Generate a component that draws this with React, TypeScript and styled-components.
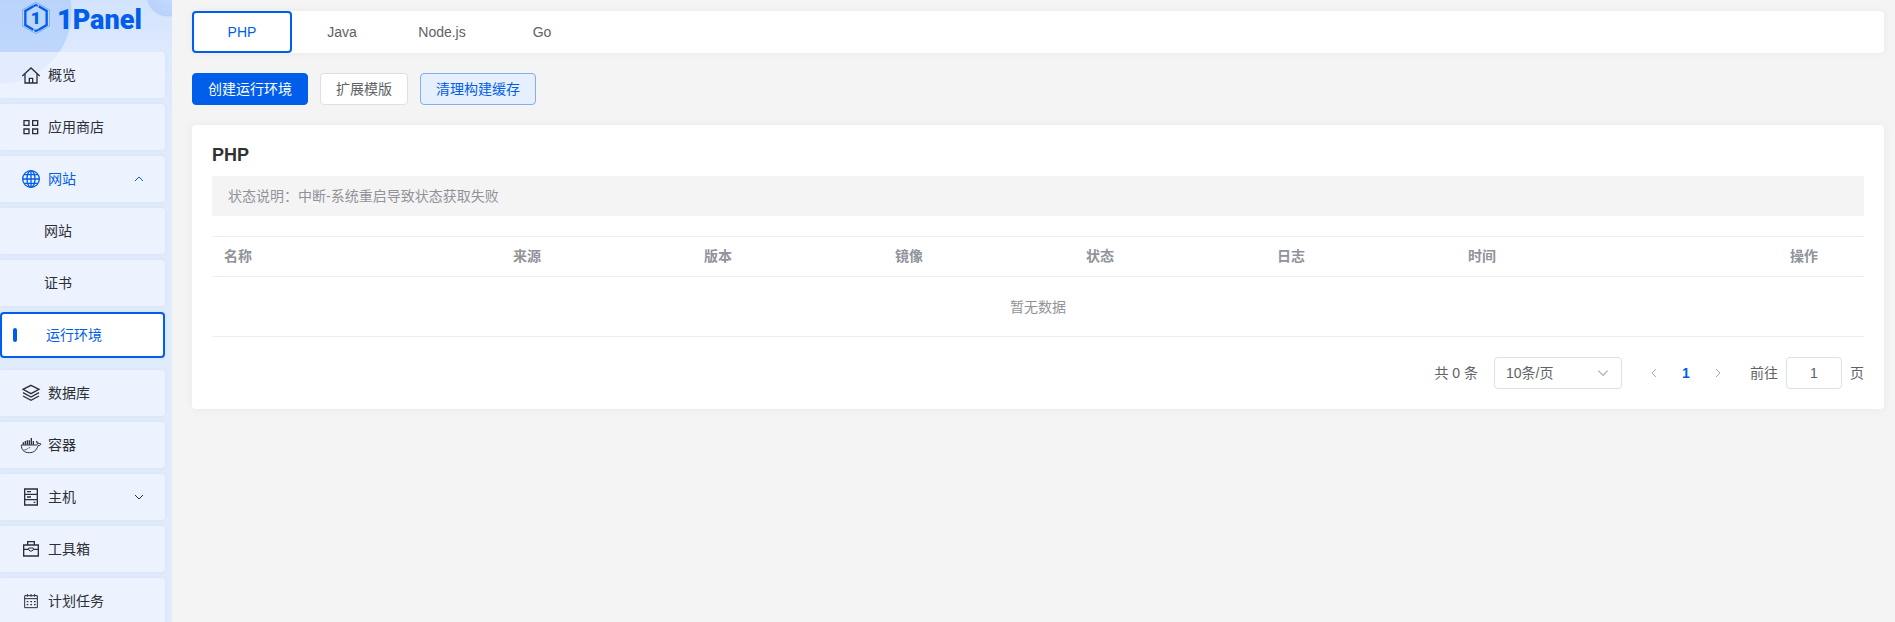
import React, { useState } from 'react';
import styled, { createGlobalStyle, css } from 'styled-components';

const blue = '#005eeb';
const borderGrey = '#dcdfe6';
const lineGrey = '#ebeef5';

const GlobalStyle = createGlobalStyle`
  *, *::before, *::after { box-sizing: border-box; }
  body {
    margin: 0;
    background: #f4f4f4;
    color: #606266;
    font-family: "Liberation Sans", "Noto Sans CJK SC", sans-serif;
    font-size: 14px;
    line-height: 20px;
  }
  button, input, select { font: inherit; color: inherit; margin: 0; }
`;

const Shell = styled.div`
  display: flex;
  height: 100vh;
`;

const Sidebar = styled.aside`
  display: flex;
  flex-direction: column;
  flex: none;
  width: 172px;
  overflow: hidden;
  background:
    radial-gradient(circle at 168px -5px, #c6dbfc 0, #b9d2fb 21px, transparent 22px),
    radial-gradient(circle at 0 12px, rgba(160, 196, 250, 0.5) 0, rgba(160, 196, 250, 0.5) 71px, transparent 72px),
    linear-gradient(180deg, #d3e3fd 0, #dde9fd 52px, #e0ebfb 120px, #e0ebfb 100%);
`;

const Logo = styled.a`
  display: flex;
  align-items: center;
  gap: 7px;
  flex: none;
  height: 52px;
  padding: 0 0 16px 22px;
  color: ${blue};
  text-decoration: none;
`;

const LogoName = styled.span`
  padding-top: 4px;
  font-family: Roboto, sans-serif;
  font-size: 27px;
  font-weight: 900;
  line-height: 32px;
`;

const Menu = styled.nav`
  flex: 1;
  min-height: 0;
  overflow-y: auto;
  scrollbar-width: none;
`;

const MenuList = styled.ul`
  display: flex;
  flex-direction: column;
  gap: 6px;
  margin: 0;
  padding: 0 7px 6px 0;
  list-style: none;
`;

const SubList = styled(MenuList)`
  padding: 6px 0;
`;

const MenuLink = styled.a<{ $sub?: boolean; $open?: boolean; $active?: boolean }>`
  display: flex;
  align-items: center;
  gap: 8px;
  height: 46px;
  padding: 0 20px 0 ${(p) => (p.$sub ? '44px' : '22px')};
  border-radius: 0 4px 4px 0;
  background: rgba(244, 248, 255, 0.65);
  box-shadow: 0 0 4px rgba(0, 94, 235, 0.05);
  color: ${(p) => (p.$open ? blue : '#2b2f36')};
  text-decoration: none;

  ${(p) =>
    p.$active &&
    css`
      gap: 29px;
      padding-left: 11px;
      border: 2px solid ${blue};
      border-radius: 4px;
      background: #fff;
      color: ${blue};

      &::before {
        content: '';
        width: 4px;
        height: 14px;
        border-radius: 2px;
        background: ${blue};
      }
    `}
`;

const MenuLabel = styled.span`
  flex: 1;
`;

const Main = styled.main`
  flex: 1;
  display: flex;
  flex-direction: column;
  gap: 20px;
  min-width: 0;
  padding: 11px 11px 20px 20px;
  overflow-y: auto;
`;

const Tabs = styled.div`
  display: flex;
  border-radius: 4px;
  background: #fff;
  box-shadow: 0 0 8px rgba(0, 0, 0, 0.05);
`;

const Tab = styled.button<{ $active: boolean }>`
  width: 100px;
  height: 42px;
  padding: 0;
  border: 2px solid ${(p) => (p.$active ? blue : 'transparent')};
  border-radius: 4px;
  background: transparent;
  color: ${(p) => (p.$active ? blue : '#606266')};
  cursor: pointer;
`;

const Actions = styled.div`
  display: flex;
  gap: 12px;
`;

const variants = {
  primary: css`
    border-color: ${blue};
    background: ${blue};
    color: #fff;
  `,
  plain: css`
    border-color: ${borderGrey};
    background: #fff;
    color: #606266;
  `,
  tinted: css`
    border-color: #80aff5;
    background: #e5effd;
    color: ${blue};
  `,
};

const ActionButton = styled.button<{ $variant: keyof typeof variants }>`
  height: 32px;
  padding: 0 15px;
  border: 1px solid;
  border-radius: 4px;
  cursor: pointer;
  ${(p) => variants[p.$variant]}
`;

const Card = styled.section`
  padding: 20px;
  border-radius: 4px;
  background: #fff;
  box-shadow: 0 0 10px rgba(0, 0, 0, 0.05);
`;

const Title = styled.h1`
  margin: 0 0 11px;
  color: #303133;
  font-size: 18px;
  line-height: 20px;
`;

const Notice = styled.p`
  margin: 0 0 20px;
  padding: 10px 16px;
  background: #f4f4f5;
  color: #909399;
`;

const Table = styled.table`
  width: 100%;
  border-collapse: collapse;
  table-layout: fixed;
  color: #909399;
`;

const HeadCell = styled.th<{ $width?: string; $center?: boolean }>`
  width: ${(p) => p.$width ?? 'auto'};
  height: 40px;
  padding: 0 12px 2px;
  border: solid ${lineGrey};
  border-width: 1px 0;
  text-align: ${(p) => (p.$center ? 'center' : 'left')};
`;

const EmptyCell = styled.td`
  height: 60px;
  padding: 0;
  border-bottom: 1px solid ${lineGrey};
  text-align: center;
`;

const Pagination = styled.div`
  display: flex;
  align-items: center;
  justify-content: flex-end;
  gap: 16px;
  margin-top: 20px;
`;

const SelectBox = styled.div`
  display: grid;
  align-items: center;
  width: 128px;

  & > * { grid-area: 1 / 1; }
  & > svg {
    z-index: 1;
    justify-self: end;
    margin-right: 12px;
    color: #a8abb2;
    pointer-events: none;
  }
`;

const Select = styled.select`
  width: 100%;
  height: 32px;
  padding: 0 11px;
  border: 1px solid ${borderGrey};
  border-radius: 4px;
  background: #fff;
  appearance: none;
`;

const Pager = styled.div`
  display: flex;
`;

const PageButton = styled.button<{ $current?: boolean }>`
  display: flex;
  align-items: center;
  justify-content: center;
  width: 32px;
  height: 32px;
  padding: 0;
  border: 0;
  background: transparent;
  color: ${(p) => (p.$current ? blue : '#a8abb2')};
  font-weight: ${(p) => (p.$current ? 700 : 400)};
`;

const JumpLabel = styled.label`
  display: flex;
  align-items: center;
  gap: 8px;
`;

const JumpInput = styled.input`
  width: 56px;
  height: 32px;
  padding: 0 11px;
  border: 1px solid ${borderGrey};
  border-radius: 4px;
  background: #fff;
  text-align: center;
`;

const icons = {
  home: (
    <>
      <path d="M1 30 27 6l26 24" />
      <path d="M9 24v27h36V24M22 51V37h10v14" />
    </>
  ),
  apps: <path d="M6 8h15v14H6zM32 8h15v14H32zM6 33h15v14H6zM32 33h15v14H32z" />,
  globe: (
    <>
      <circle cx="27" cy="27" r="25" />
      <ellipse cx="27" cy="27" rx="12" ry="25" />
      <path d="M2 27h50M27 2v50M6 14h42M6 40h42" />
    </>
  ),
  layers: <path d="M27 4 51 16 27 29 3 16zM3 26l24 13 24-13M3 36l24 13 24-13" />,
  docker: (
    <>
      <path d="M-2 27h44c4 0 5-2 4-5l-3-6c4 1 6 4 6 7 4-1 6 0 8 1-2 4-5 5-9 5-4 14-13 21-26 21C6 50-2 42-2 27z" strokeWidth="3" />
      <path d="M4 26v-7M10 26V15M16 26V13M22 26V13M28 26V6M34 26V15" strokeWidth="4" />
      <path d="M4 42c7 0 12-2 15-6" strokeWidth="2" />
      <circle cx="23" cy="35" r="1" strokeWidth="2" />
    </>
  ),
  server: (
    <>
      <path d="M8 3h38v48H8zM8 19h38M8 35h38" />
      <path d="M15 11h12M15 27h12M35 43h5" />
    </>
  ),
  toolbox: (
    <>
      <path d="M5 15h44v33H5zM17 15V5h20v10M5 28h13M36 28h13" />
      <path d="M20 24h14v6l-7 4-7-4z" strokeWidth="3" />
    </>
  ),
  calendar: (
    <>
      <path d="M8 11h38v36H8zM8 20h38" strokeWidth="3" />
      <path d="M16 6v8M27 6v8M38 6v8" strokeWidth="3" />
      <path d="M14 29h5M25 29h5M36 29h5M14 38h5M25 38h5M36 38h5" />
    </>
  ),
};

type IconName = keyof typeof icons;

const MenuIcon = ({ name }: { name: IconName }) => (
  <svg width="18" height="18" viewBox="0 0 54 54" fill="none" stroke="currentColor" strokeWidth="4" overflow="visible" aria-hidden="true">
    {icons[name]}
  </svg>
);

const chevrons = {
  up: 'M2 8l4-4 4 4',
  down: 'M2 4l4 4 4-4',
  left: 'M8 2L4 6l4 4',
  right: 'M4 2l4 4-4 4',
};

const Chevron = ({ to, size = 12 }: { to: keyof typeof chevrons; size?: number }) => (
  <svg width={size} height={size} viewBox="0 0 12 12" fill="none" stroke="currentColor" aria-hidden="true">
    <path d={chevrons[to]} />
  </svg>
);

const LogoMark = () => (
  <svg width="28" height="32" viewBox="0 0 84 96" fill="none" stroke="currentColor" aria-hidden="true">
    <path d="M42 1 83 24v48L42 95 1 72V24z" strokeWidth="2" opacity="0.5" />
    <path d="M50 13 74 27v42L50 83M34 13 10 27v42l24 14" strokeWidth="7" />
    <path d="M34 13l8-4 5 3M50 83l-8 4-5-3" strokeWidth="6" />
    <text x="41" y="66" textAnchor="middle" fill="currentColor" stroke="none" fontFamily="Roboto, sans-serif" fontWeight="900" fontSize="52">
      1
    </text>
  </svg>
);

type Item = { label: string; icon: IconName; arrow?: 'up' | 'down'; children?: string[] };

const menu: Item[] = [
  { label: '概览', icon: 'home' },
  { label: '应用商店', icon: 'apps' },
  { label: '网站', icon: 'globe', arrow: 'up', children: ['网站', '证书', '运行环境'] },
  { label: '数据库', icon: 'layers' },
  { label: '容器', icon: 'docker' },
  { label: '主机', icon: 'server', arrow: 'down' },
  { label: '工具箱', icon: 'toolbox' },
  { label: '计划任务', icon: 'calendar' },
];

const tabs = ['PHP', 'Java', 'Node.js', 'Go'];

const columns = [
  { label: '名称', width: '17.5%' },
  { label: '来源', width: '11.56%' },
  { label: '版本', width: '11.56%' },
  { label: '镜像', width: '11.56%' },
  { label: '状态', width: '11.56%' },
  { label: '日志', width: '11.56%' },
  { label: '时间' },
  { label: '操作', width: '120px', center: true },
];

export default function App() {
  const [tab, setTab] = useState('PHP');
  const [page, setPage] = useState('1');

  return (
    <>
      <GlobalStyle />
      <Shell>
        <Sidebar>
          <Logo href="#">
            <LogoMark />
            <LogoName>1Panel</LogoName>
          </Logo>
          <Menu>
            <MenuList>
              {menu.map((item) => (
                <li key={item.label}>
                  <MenuLink href="#" $open={item.arrow === 'up'}>
                    <MenuIcon name={item.icon} />
                    <MenuLabel>{item.label}</MenuLabel>
                    {item.arrow && <Chevron to={item.arrow} />}
                  </MenuLink>
                  {item.children && (
                    <SubList>
                      {item.children.map((label) => (
                        <li key={label}>
                          <MenuLink href="#" $sub $active={label === '运行环境'}>
                            <MenuLabel>{label}</MenuLabel>
                          </MenuLink>
                        </li>
                      ))}
                    </SubList>
                  )}
                </li>
              ))}
            </MenuList>
          </Menu>
        </Sidebar>

        <Main>
          <Tabs role="tablist">
            {tabs.map((name) => (
              <Tab key={name} role="tab" aria-selected={tab === name} $active={tab === name} onClick={() => setTab(name)}>
                {name}
              </Tab>
            ))}
          </Tabs>

          <Actions>
            <ActionButton $variant="primary">创建运行环境</ActionButton>
            <ActionButton $variant="plain">扩展模版</ActionButton>
            <ActionButton $variant="tinted">清理构建缓存</ActionButton>
          </Actions>

          <Card>
            <Title>{tab}</Title>
            <Notice>状态说明：中断-系统重启导致状态获取失败</Notice>
            <Table>
              <thead>
                <tr>
                  {columns.map((c) => (
                    <HeadCell key={c.label} scope="col" $width={c.width} $center={c.center}>
                      {c.label}
                    </HeadCell>
                  ))}
                </tr>
              </thead>
              <tbody>
                <tr>
                  <EmptyCell colSpan={columns.length}>暂无数据</EmptyCell>
                </tr>
              </tbody>
            </Table>
            <Pagination>
              <span>共 0 条</span>
              <SelectBox>
                <Select aria-label="每页条数" defaultValue="10">
                  <option value="10">10条/页</option>
                  <option value="20">20条/页</option>
                  <option value="50">50条/页</option>
                </Select>
                <Chevron to="down" size={14} />
              </SelectBox>
              <Pager>
                <PageButton aria-label="上一页" disabled>
                  <Chevron to="left" />
                </PageButton>
                <PageButton $current>1</PageButton>
                <PageButton aria-label="下一页" disabled>
                  <Chevron to="right" />
                </PageButton>
              </Pager>
              <JumpLabel>
                前往
                <JumpInput value={page} onChange={(e) => setPage(e.target.value)} />
                页
              </JumpLabel>
            </Pagination>
          </Card>
        </Main>
      </Shell>
    </>
  );
}
